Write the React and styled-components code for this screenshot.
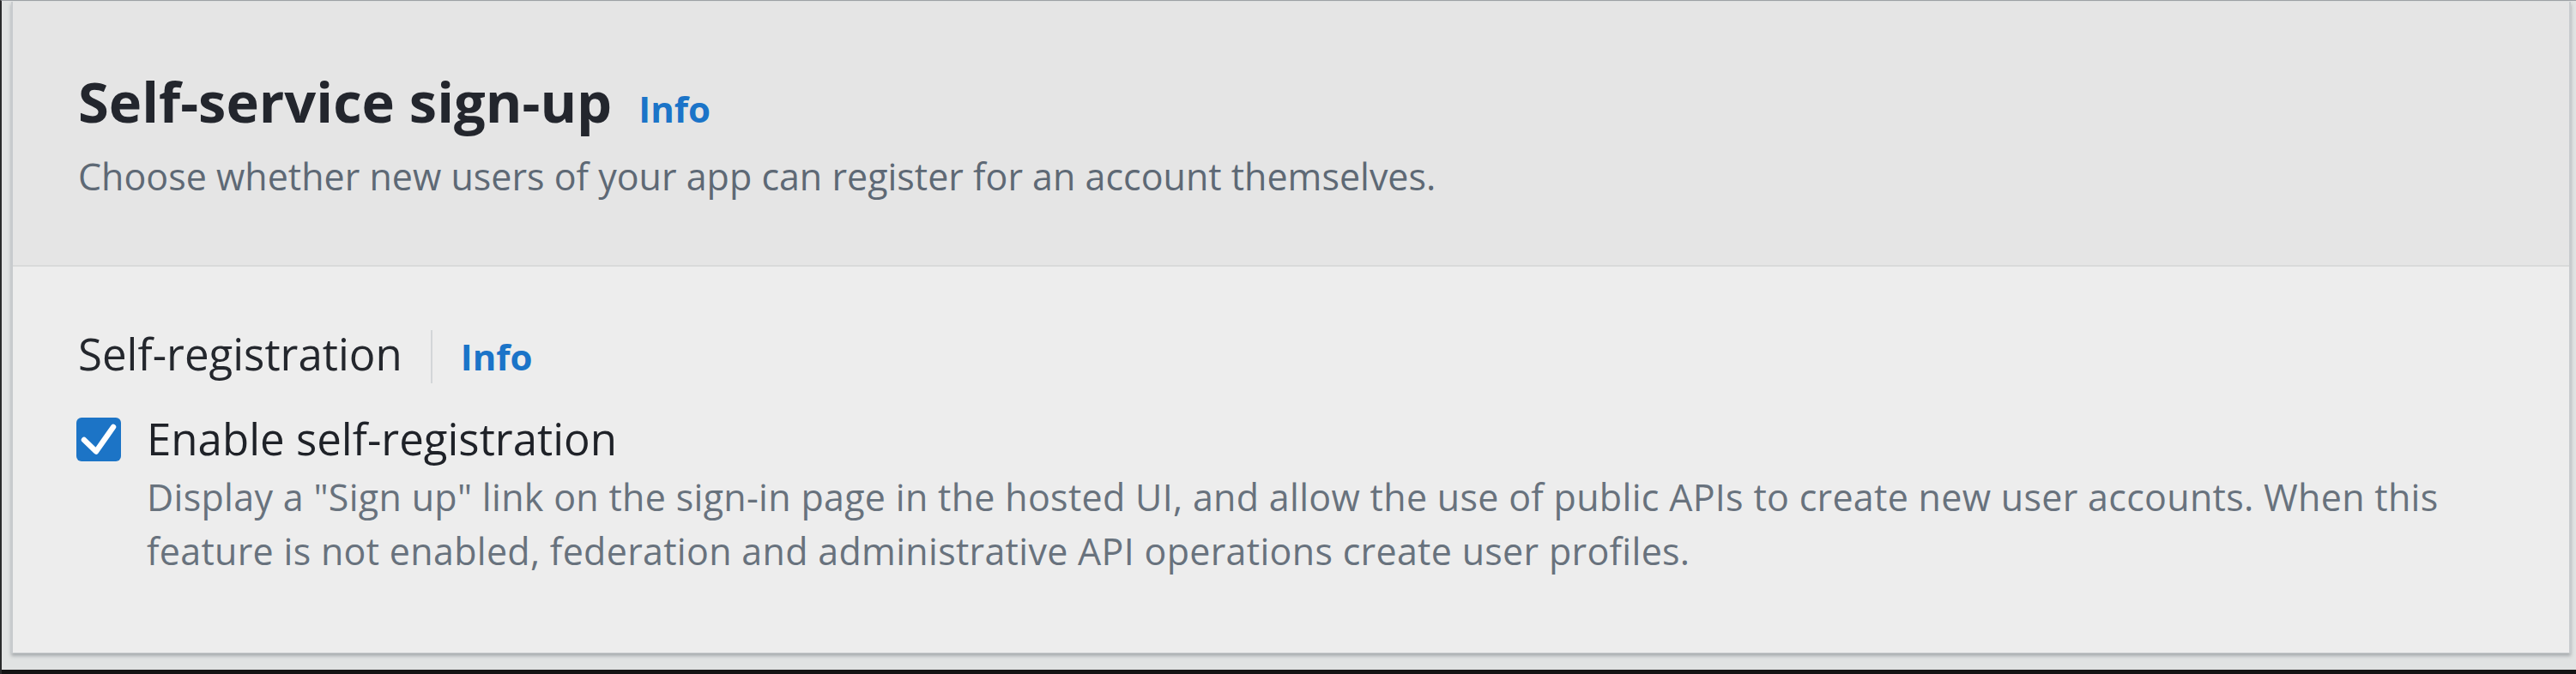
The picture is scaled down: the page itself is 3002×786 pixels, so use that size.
import styled, { createGlobalStyle } from "styled-components";

const GlobalStyle = createGlobalStyle`
  html, body {
    margin: 0;
    padding: 0;
    background: #e1e3e3;
  }
  body {
    font-family: "Open Sans", "Noto Sans", sans-serif;
  }
`;

function CheckMark() {
  return (
    <svg width="52" height="51" viewBox="0 0 52 51">
      <polyline
        points="9,26 23,39.5 43,11"
        fill="none"
        stroke="#ffffff"
        strokeWidth="6.5"
        strokeLinecap="round"
        strokeLinejoin="round"
      />
    </svg>
  );
}

function App() {
  return (
    <>
      <GlobalStyle />
      <Frame>
        <Card>
          <Header>
            <TitleRow>
              <Title>Self-service sign-up</Title>
              <InfoLink>Info</InfoLink>
            </TitleRow>
            <Description>
              Choose whether new users of your app can register for an account themselves.
            </Description>
          </Header>
          <Body>
            <LegendRow>
              <Legend>Self-registration</Legend>
              <InfoLink $divided>Info</InfoLink>
            </LegendRow>
            <CheckRow>
              <CheckBox>
                <CheckMark />
              </CheckBox>
              <CheckText>
                <CheckLabel>Enable self-registration</CheckLabel>
                <CheckHint>
                  Display a "Sign up" link on the sign-in page in the hosted UI, and allow the use of
                  public APIs to create new user accounts. When this feature is not enabled,
                  federation and administrative API operations create user profiles.
                </CheckHint>
              </CheckText>
            </CheckRow>
          </Body>
        </Card>
        <BottomBar />
      </Frame>
    </>
  );
}

let Frame = styled.div`
  box-sizing: border-box;
  width: 3002px;
  height: 786px;
  display: flex;
  flex-direction: column;
  border-top: 1px solid #9da1a5;
  border-left: 2px solid #2a2b2c;
  padding: 1px 6px 0 11px;
  background: #e1e3e3;
  overflow: hidden;
`;

let Card = styled.div`
  display: flex;
  flex-direction: column;
  border: 2px solid #c8cbce;
  border-top: none;
  border-bottom-width: 1px;
  box-shadow: 0 3px 4px rgba(60, 70, 78, 0.35);
`;

let Header = styled.div`
  display: flex;
  flex-direction: column;
  gap: 17px;
  padding: 76px 76px 72px 76px;
  background: #e5e5e5;
  border-bottom: 2px solid #d9dada;
`;

let TitleRow = styled.div`
  display: flex;
  align-items: baseline;
  gap: 31px;
`;

let Title = styled.h2`
  margin: 0;
  font-size: 65px;
  line-height: 80px;
  font-weight: 700;
  color: #23262d;
`;

let InfoLink = styled.span`
  font-size: 42px;
  line-height: 62px;
  font-weight: 700;
  color: #1b74c8;
  ${({ $divided }) =>
    $divided &&
    `
    border-left: 2px solid #d3d6d8;
    padding-left: 33px;
  `}
`;

let Description = styled.p`
  margin: 0;
  font-size: 43px;
  line-height: 62px;
  color: #5e6975;
`;

let Body = styled.div`
  display: flex;
  flex-direction: column;
  gap: 33px;
  padding: 70px 76px 87px 76px;
  background: #ededed;
`;

let LegendRow = styled.div`
  display: flex;
  align-items: baseline;
  gap: 33px;
`;

let Legend = styled.span`
  font-size: 51px;
  line-height: 62px;
  color: #24272d;
`;

let CheckRow = styled.div`
  display: flex;
  align-items: flex-start;
  gap: 30px;
  margin-left: -2px;
`;

let CheckBox = styled.div`
  flex: none;
  width: 52px;
  height: 51px;
  margin-top: 7px;
  border-radius: 6px;
  background: #1c74c6;
  display: flex;
`;

let CheckText = styled.div`
  display: flex;
  flex-direction: column;
  gap: 6px;
`;

let CheckLabel = styled.span`
  font-size: 51px;
  line-height: 62px;
  color: #1f2228;
`;

let CheckHint = styled.p`
  margin: 0;
  font-size: 43px;
  line-height: 63px;
  letter-spacing: 0.3px;
  color: #68727d;
`;

let BottomBar = styled.div`
  margin-top: auto;
  height: 5px;
  margin-left: -11px;
  margin-right: -6px;
  background: #141414;
`;

export default App;
